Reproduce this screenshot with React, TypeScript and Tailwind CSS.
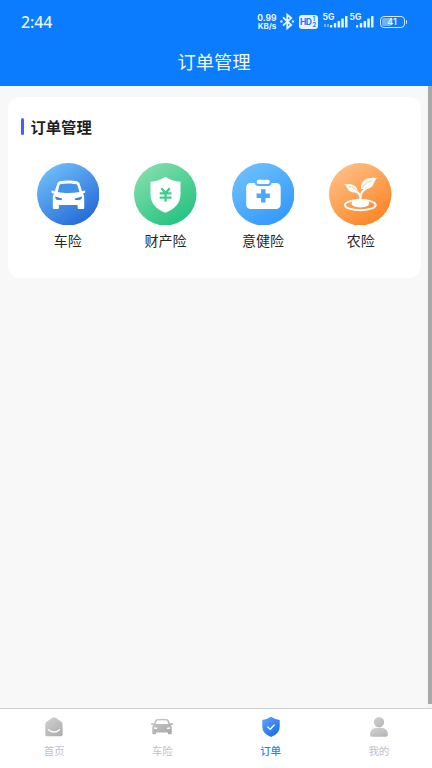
import React from "react";

const FONT = "font-['Noto_Sans','Noto_Sans_CJK_SC',sans-serif]";

function Grad({ id, from, to }: { id: string; from: string; to: string }) {
  return (
    <defs>
      <linearGradient id={id} x1="0.15" y1="0" x2="0.85" y2="1">
        <stop offset="0" stopColor={from} />
        <stop offset="1" stopColor={to} />
      </linearGradient>
    </defs>
  );
}

function Signal() {
  return (
    <svg width="19" height="13" viewBox="0 0 19 13" fill="#eaf3ff">
      <rect x="0" y="10" width="2.2" height="2.6" rx="0.5" />
      <rect x="3.8" y="8" width="2.4" height="4.6" rx="0.5" />
      <rect x="7.6" y="6" width="2.5" height="6.6" rx="0.5" />
      <rect x="11.3" y="3.6" width="2.5" height="9" rx="0.5" />
      <rect x="15" y="1" width="2.5" height="11.6" rx="0.5" />
    </svg>
  );
}

function StatusBar() {
  return (
    <div className="flex h-[43px] items-center pl-[21px] pr-[25px] text-[#eaf3ff]">
      <span className="font-['Noto_Sans',sans-serif] text-[15.8px] font-medium leading-5">2:44</span>
      <div className="ml-auto flex h-5 items-center">
        <div className="flex w-[21px] flex-col text-center font-['Inter',sans-serif] text-[8px] font-bold">
          <div className="h-2 whitespace-nowrap text-[8.5px] leading-[8px]">0.99</div>
          <div className="h-2 whitespace-nowrap leading-[8px]">KB/s</div>
        </div>
        <svg className="ml-[2px]" width="15" height="17" viewBox="0 0 15 17" fill="none" stroke="#eaf3ff" strokeWidth="1.8">
          <path d="M3 4.4 11.2 12 7.3 15.3V1.7L11.2 5 3 12.6" />
          <path d="M.3 8.5h2.2M11.9 8.5h2.2" strokeWidth="2.1" />
        </svg>
        <div className="ml-1 flex h-[14px] w-[19px] items-center justify-center gap-[1px] rounded-[3px] bg-[#eaf3ff] font-['Inter',sans-serif] font-bold text-[#0c7cff]">
          <span className="text-[8.5px] leading-3 tracking-[-0.5px]">HD</span>
          <span className="flex flex-col text-[5.5px] leading-[6px]">
            <span>1</span>
            <span>2</span>
          </span>
        </div>
        <div className="relative ml-[11px] flex h-5 w-[24px] items-end pb-[4px] pl-[1px]">
          <span className="absolute -left-[6px] top-px font-['Inter',sans-serif] text-[8.5px] font-bold leading-[9px]">5G</span>
          <span className="absolute -left-[5px] top-[12px] h-[3px] w-[2px] bg-[#73b4ff]" />
          <span className="absolute -left-[2px] top-[12px] h-[3px] w-[2px] bg-[#73b4ff]" />
          <Signal />
        </div>
        <div className="relative ml-[3px] flex h-5 w-[20px] items-end pb-[4px]">
          <span className="absolute -left-[6px] top-px font-['Inter',sans-serif] text-[8.5px] font-bold leading-[9px]">5G</span>
          <Signal />
        </div>
        <div className="ml-[4px] flex h-[12px] w-[25px] items-center rounded-[4px] border-[1.5px] border-[#d5e8ff] p-px">
          <div className="flex h-full w-full items-center justify-center rounded-[2px] bg-gradient-to-r from-[#71b2ff] from-45% to-transparent to-45% font-['Inter',sans-serif] text-[9px] font-semibold">
            41
          </div>
        </div>
        <span className="ml-px h-1 w-[1.5px] rounded-r bg-[#d5e8ff]" />
      </div>
    </div>
  );
}

function CarIcon() {
  return (
    <svg width="62.5" height="62.5" viewBox="0 0 62.5 62.5">
      <Grad id="car" from="#72c2fc" to="#1f64d4" />
      <circle cx="31.25" cy="31.25" r="31.25" fill="url(#car)" />
      <path
        d="M23 18.2c5-1.1 12-1.1 17 0 1.4.4 2.1 1.2 2.6 2.5l2.5 7.5 2-.6c1.4-.3 1.7 2.2.2 2.7l-1.6.3c1.3 1.2 1.5 2.5 1.5 4.2v9.9c0 .9-.5 1.3-1.3 1.3h-4c-.9 0-1.3-.5-1.3-1.3v-2.6H21.9v2.6c0 .9-.5 1.3-1.3 1.3h-3.5c-.8 0-1.3-.5-1.3-1.3v-9.9c0-1.7.3-3 1.5-4.2l-2-.3c-1.5-.6-1.1-3.1.3-2.7l2.1.6 2.6-7.5c.5-1.3 1.3-2.2 2.7-2.5Z"
        fill="#fff"
      />
      <path d="M23.2 21.2c5-1 11.5-1 16 0 .6.1 1 .5 1.2 1.1l2.1 6.6c-7.1 1.4-15.4 1.4-21.7 0l1.6-6.6c.2-.6.4-.9.8-1.1Z" fill="#4493e8" />
      <path d="m18.2 33.6 6.8 1.9c.5.9-.5 1.6-1.4 1.6H21c-1.9 0-3-1.3-2.8-3.5ZM45 33.6l-7.2 1.9c-.5.9.5 1.6 1.4 1.6h2.7c1.9 0 3.3-1.3 3.1-3.5Z" fill="#3c86df" />
    </svg>
  );
}

function ShieldIcon() {
  return (
    <svg width="62.5" height="62.5" viewBox="0 0 62.5 62.5">
      <Grad id="property" from="#89dfad" to="#1cc17f" />
      <circle cx="31.25" cy="31.25" r="31.25" fill="url(#property)" />
      <path d="M31.3 13.7c4.6 3.2 9.3 4.6 15.2 5V31c0 9-5.4 15-15.2 18.8C21.6 46 16.5 40 16.5 31V18.7c5.7-.4 10.4-1.8 14.8-5Z" fill="#fff" />
      <path d="m27.3 25.3 4.3 4.8 4.2-4.8M25.7 30.4h11.8M25.7 34.6h11.8M31.6 30v8.8" fill="none" stroke="#42cb91" strokeWidth="2.3" />
    </svg>
  );
}

function MedicalIcon() {
  return (
    <svg width="62.5" height="62.5" viewBox="0 0 62.5 62.5">
      <Grad id="medical" from="#71c2fc" to="#2e96fb" />
      <circle cx="31.25" cy="31.25" r="31.25" fill="url(#medical)" />
      <rect x="24.9" y="16.8" width="12.6" height="4.2" rx="1.5" fill="#fff" />
      <path d="M18.6 20h4.3c.4 2.3 1.5 3 3.2 3h10.2c1.8 0 2.9-.7 3.2-3h4.2c3.4 0 5 1.8 5 5v15.7c0 3.7-1.8 5.2-5.3 5.2H19.5c-3.6 0-5.3-1.5-5.3-5.2V25c0-3.2 1.4-5 4.4-5Z" fill="#fff" />
      <path d="M31.3 26.2v13.2M24.6 32.7h13.3" stroke="#4ba9fb" strokeWidth="4.5" />
    </svg>
  );
}

function PlantIcon() {
  return (
    <svg width="62.5" height="62.5" viewBox="0 0 62.5 62.5">
      <Grad id="plant" from="#ffc289" to="#fb8120" />
      <circle cx="31.25" cy="31.25" r="31.25" fill="url(#plant)" />
      <ellipse cx="31.3" cy="42" rx="15.4" ry="5.2" fill="none" stroke="#fff" strokeWidth="2" />
      <path d="M22.5 40.3c0-2 3.7-3.2 8.8-3.2s8.9 1.2 8.9 3.2c0 2.5-3.9 4.1-8.9 4.1s-8.8-1.6-8.8-4.1Z" fill="#fff" />
      <path d="M31.4 39.5V31M31.4 34.5c.1-4.8 2.2-7.2 7.7-10.2M31.4 34c-.2-3.2-2.8-4.8-6.2-6.4" fill="none" stroke="#fff" strokeWidth="2.2" />
      <path d="M15.2 21.3c7.9-.9 12.8 1.4 13.9 8-6.1.7-9.7-1-11.1-4.6-.6-1.5-1.4-2.6-2.8-3.4ZM47.8 15.2C37.8 13.8 31.7 16.8 32 26c6.8.5 11.3-.7 12.9-5.7.6-2 1.3-3.6 2.9-5.1Z" fill="#fff" />
      <path d="M20 23.3c3.8 1 6.5 2.5 8.6 5M43.5 17.4c-4.5 1.1-7.7 3.5-10.7 7.5" fill="none" stroke="#fda65e" strokeWidth=".6" />
    </svg>
  );
}

const services = [
  { label: "车险", icon: <CarIcon /> },
  { label: "财产险", icon: <ShieldIcon /> },
  { label: "意健险", icon: <MedicalIcon /> },
  { label: "农险", icon: <PlantIcon /> },
];

function HomeTab() {
  return (
    <svg width="24" height="24" viewBox="0 0 24 24">
      <Grad id="home" from="#d0d0d0" to="#adadad" />
      <path d="M10.8 2.6q1.2-.8 2.4 0l6.2 4.2q1.2.9 1.2 2.3v10.3q0 1.9-1.9 1.9H5.2q-1.9 0-1.9-1.9V9.1q0-1.4 1.2-2.3Z" fill="url(#home)" />
      <path d="M6.5 14.7q5.5 4.8 11 0" fill="none" stroke="#fff" strokeWidth="1.4" strokeLinecap="round" />
    </svg>
  );
}

function CarTab() {
  return (
    <svg width="24" height="24" viewBox="0 0 24 24">
      <Grad id="carTab" from="#c8c8c8" to="#a8a8a8" />
      <path
        d="M6.5 4.2Q12 3.3 17.5 4.2q.8.2 1.1 1l1.5 3.3 2-.4q1 0 1 .8t-.9.8l-1.5.2q1 .9 1 2.4v6q0 1-.9 1h-2q-.9 0-.9-1v-.8H6.1v.8q0 1-.9 1h-2q-.9 0-.9-1v-6q0-1.5 1-2.4l-1.5-.2q-.9 0-.9-.8t1-.8l2 .4L5.4 5.2q.3-.8 1.1-1Z"
        fill="url(#carTab)"
      />
      <path d="M7 5.6q5-.8 10 0l1.5 3.5H5.5ZM3.7 12.3l3.5.5q.4 1.3-.8 1.3H5q-1.3 0-1.3-1.8ZM20.3 12.3l-3.5.5q-.4 1.3.8 1.3H19q1.3 0 1.3-1.8Z" fill="#fff" />
    </svg>
  );
}

function OrderTab() {
  return (
    <svg width="24" height="24" viewBox="0 0 24 24">
      <Grad id="order" from="#5aa2fc" to="#1769ed" />
      <path d="M12 1.8q3.9 2.6 8.7 3.2v6.7q0 6.8-8.7 10.3-8.7-3.5-8.7-10.3V5Q8.1 4.4 12 1.8Z" fill="url(#order)" />
      <path d="m8.7 12 2.5 2.3 4-4.3" fill="none" stroke="#fff" strokeWidth="1.3" strokeLinecap="round" strokeLinejoin="round" />
    </svg>
  );
}

function UserTab() {
  return (
    <svg width="24" height="24" viewBox="0 0 24 24">
      <Grad id="user" from="#d2d2d2" to="#b5b5b5" />
      <circle cx="12" cy="7.1" r="5.2" fill="url(#user)" />
      <path d="M3.1 19.5q.3-6.8 7-6.8h3.8q6.7 0 7 6.8 0 2.3-1.9 2.3H5q-1.9 0-1.9-2.3Z" fill="url(#user)" />
    </svg>
  );
}

const tabs = [
  { label: "首页", icon: <HomeTab /> },
  { label: "车险", icon: <CarTab /> },
  { label: "订单", icon: <OrderTab />, active: true },
  { label: "我的", icon: <UserTab /> },
];

export default function App() {
  return (
    <div className={`flex h-[768px] w-[432px] flex-col overflow-hidden bg-[#f8f8f8] ${FONT}`}>
      <header className="h-[86px] shrink-0 bg-[#0c7cff]">
        <StatusBar />
        <h1 className="pt-[5px] pr-[4px] text-center text-[18.3px] leading-7 text-[#f3f8ff]">订单管理</h1>
      </header>

      <main className="flex min-h-0 flex-1">
        <div className="flex-1 pl-2 pr-[6px] pt-[11px]">
          <section className="h-[181px] rounded-[12px] bg-white px-[11.5px] pt-[17px]">
            <div className="flex h-6 items-center">
              <span className="ml-[1px] h-[17px] w-[3px] rounded-[2px] bg-[#4263ef]" />
              <h2 className="ml-[7px] pt-px text-[15.3px] font-bold leading-6 text-[#1f1f1f]">订单管理</h2>
            </div>
            <div className="-ml-[0.5px] mt-[24.6px] grid grid-cols-4">
              {services.map((s) => (
                <div key={s.label} className="flex flex-col items-center">
                  {s.icon}
                  <span className="mt-[4px] text-[14px] leading-6 text-[#262626]">{s.label}</span>
                </div>
              ))}
            </div>
          </section>
        </div>
        <div className="w-[5px] shrink-0 bg-[#f4f4f4]">
          <div className="ml-px h-[618px] w-1 bg-[#a9a9a9]" />
        </div>
      </main>

      <nav className="grid h-[60px] w-[433px] shrink-0 grid-cols-4 border-t border-[#cfcfcf] bg-white pt-[6px]">
        {tabs.map((t) => (
          <div key={t.label} className="flex flex-col items-center">
            {t.icon}
            <span className={`mt-[4px] text-[10.5px] leading-4 ${t.active ? "font-medium text-[#2384fb]" : "text-[#bfc0cb]"}`}>{t.label}</span>
          </div>
        ))}
      </nav>
    </div>
  );
}
